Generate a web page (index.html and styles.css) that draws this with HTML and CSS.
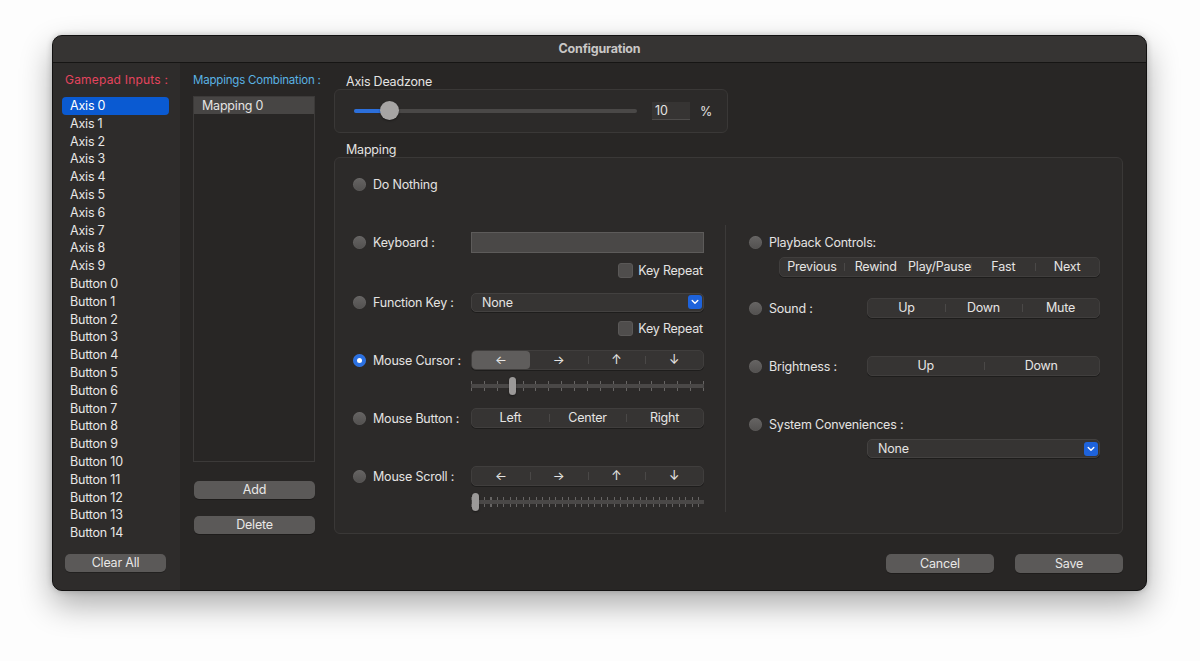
FILE: index.html
```html
<!DOCTYPE html>
<html lang="en">
<head>
    <meta charset="UTF-8">
    <meta name="viewport" content="width=device-width, initial-scale=1.0">
    <title>Configuration</title>
    <link rel="stylesheet" href="styles.css">
</head>
<body>
    <div class="window">
        <div class="titlebar">Configuration</div>
        <div class="window-body">
            <!-- gamepad inputs -->
            <aside class="sidebar">
                <div class="heading heading-red">Gamepad Inputs :</div>
                <ul class="input-list">
                    <li class="selected">Axis 0</li>
                    <li>Axis 1</li>
                    <li>Axis 2</li>
                    <li>Axis 3</li>
                    <li>Axis 4</li>
                    <li>Axis 5</li>
                    <li>Axis 6</li>
                    <li>Axis 7</li>
                    <li>Axis 8</li>
                    <li>Axis 9</li>
                    <li>Button 0</li>
                    <li>Button 1</li>
                    <li>Button 2</li>
                    <li>Button 3</li>
                    <li>Button 4</li>
                    <li>Button 5</li>
                    <li>Button 6</li>
                    <li>Button 7</li>
                    <li>Button 8</li>
                    <li>Button 9</li>
                    <li>Button 10</li>
                    <li>Button 11</li>
                    <li>Button 12</li>
                    <li>Button 13</li>
                    <li>Button 14</li>
                </ul>
                <button class="btn btn-clear">Clear All</button>
            </aside>

            <!-- mapping combinations -->
            <section class="combos">
                <div class="heading heading-blue">Mappings Combination :</div>
                <div class="combo-list">
                    <div class="combo-item selected">Mapping 0</div>
                </div>
                <button class="btn btn-add">Add</button>
                <button class="btn btn-delete">Delete</button>
            </section>

            <!-- settings -->
            <section class="settings">
                <div class="box-title">Axis Deadzone</div>
                <div class="box deadzone">
                    <div class="slider">
                        <div class="slider-fill" style="width: 31px"></div>
                        <div class="slider-knob" style="left: 26px"></div>
                    </div>
                    <div class="number-field">10</div>
                    <span class="unit">%</span>
                </div>

                <div class="box-title">Mapping</div>
                <div class="box mapping">
                    <div class="row do-nothing">
                        <span class="radio"></span><span class="opt-text">Do Nothing</span>
                    </div>
                    <div class="columns">
                        <div class="col col-left">
                            <div class="group group-first">
                                <div class="row">
                                    <div class="opt-label"><span class="radio"></span><span class="opt-text">Keyboard :</span></div>
                                    <div class="key-field"></div>
                                </div>
                                <div class="sub sub-check">
                                    <span class="checkbox"></span><span class="opt-text">Key Repeat</span>
                                </div>
                            </div>
                            <div class="group">
                                <div class="row">
                                    <div class="opt-label"><span class="radio"></span><span class="opt-text">Function Key :</span></div>
                                    <div class="popup"><span>None</span><span class="popup-arrow"><svg width="8" height="6" viewBox="0 0 8 6"><path d="M1.2 1.5 L4 4.3 L6.8 1.5" fill="none" stroke="#fff" stroke-width="1.4" stroke-linecap="round" stroke-linejoin="round"/></svg></span></div>
                                </div>
                                <div class="sub sub-check">
                                    <span class="checkbox"></span><span class="opt-text">Key Repeat</span>
                                </div>
                            </div>
                            <div class="group">
                                <div class="row">
                                    <div class="opt-label"><span class="radio checked"></span><span class="opt-text">Mouse Cursor :</span></div>
                                    <div class="segmented">
                                        <span class="seg active">←</span>
                                        <span class="seg">→</span>
                                        <span class="seg">↑</span>
                                        <span class="seg">↓</span>
                                    </div>
                                </div>
                                <div class="sub">
                                    <div class="tick-slider">
                                        <div class="tick-track"></div>
                                        <div class="tick-knob" style="left: 38px"></div>
                                    </div>
                                </div>
                            </div>
                            <div class="group">
                                <div class="row">
                                    <div class="opt-label"><span class="radio"></span><span class="opt-text">Mouse Button :</span></div>
                                    <div class="segmented">
                                        <span class="seg">Left</span>
                                        <span class="seg">Center</span>
                                        <span class="seg">Right</span>
                                    </div>
                                </div>
                            </div>
                            <div class="group">
                                <div class="row">
                                    <div class="opt-label"><span class="radio"></span><span class="opt-text">Mouse Scroll :</span></div>
                                    <div class="segmented">
                                        <span class="seg">←</span>
                                        <span class="seg">→</span>
                                        <span class="seg">↑</span>
                                        <span class="seg">↓</span>
                                    </div>
                                </div>
                                <div class="sub">
                                    <div class="tick-slider">
                                        <div class="tick-track fine"></div>
                                        <div class="tick-knob" style="left: 1px"></div>
                                    </div>
                                </div>
                            </div>
                        </div>

                        <div class="col col-right">
                            <div class="group group-playback">
                                <div class="row">
                                    <div class="opt-label wide"><span class="radio"></span><span class="opt-text">Playback Controls:</span></div>
                                </div>
                                <div class="sub sub-playback">
                                    <div class="segmented">
                                        <span class="seg">Previous</span>
                                        <span class="seg">Rewind</span>
                                        <span class="seg">Play/Pause</span>
                                        <span class="seg">Fast</span>
                                        <span class="seg">Next</span>
                                    </div>
                                </div>
                            </div>
                            <div class="group">
                                <div class="row">
                                    <div class="opt-label"><span class="radio"></span><span class="opt-text">Sound :</span></div>
                                    <div class="segmented">
                                        <span class="seg">Up</span>
                                        <span class="seg">Down</span>
                                        <span class="seg">Mute</span>
                                    </div>
                                </div>
                            </div>
                            <div class="group">
                                <div class="row">
                                    <div class="opt-label"><span class="radio"></span><span class="opt-text">Brightness :</span></div>
                                    <div class="segmented">
                                        <span class="seg">Up</span>
                                        <span class="seg">Down</span>
                                    </div>
                                </div>
                            </div>
                            <div class="group">
                                <div class="row">
                                    <div class="opt-label wide"><span class="radio"></span><span class="opt-text">System Conveniences :</span></div>
                                </div>
                                <div class="sub sub-popup">
                                    <div class="popup"><span>None</span><span class="popup-arrow"><svg width="8" height="6" viewBox="0 0 8 6"><path d="M1.2 1.5 L4 4.3 L6.8 1.5" fill="none" stroke="#fff" stroke-width="1.4" stroke-linecap="round" stroke-linejoin="round"/></svg></span></div>
                                </div>
                            </div>
                        </div>
                    </div>
                </div>

                <div class="footer">
                    <button class="btn btn-footer">Cancel</button>
                    <button class="btn btn-footer">Save</button>
                </div>
            </section>
        </div>
    </div>
</body>
</html>
```

FILE: styles.css
```css
body {
    margin: 0;
    padding: 35px 53px 70px 52px;
    background-color: #fdfdfd;
    font-family: Inter, "Liberation Sans", sans-serif;
    font-size: 12.5px;
    letter-spacing: -0.2px;
    color: #e4e3e2;
}
.window {
    width: 1095px;
    height: 556px;
    box-sizing: border-box;
    border: 1px solid #121111;
    border-radius: 10px;
    background-color: #282625;
    box-shadow: 0 14px 32px rgba(0, 0, 0, 0.32), 0 0 6px rgba(0, 0, 0, 0.2);
    overflow: hidden;
    display: flex;
    flex-direction: column;
}
.titlebar {
    height: 26px;
    line-height: 26px;
    flex-shrink: 0;
    text-align: center;
    font-weight: 700;
    font-size: 12.5px;
    color: #c9c7c6;
    background-color: #363433;
    border-bottom: 1px solid #161514;
}
.window-body {
    flex: 1;
    display: flex;
    min-height: 0;
}
.heading {
    height: 16px;
    line-height: 16px;
    font-size: 11.5px;
    white-space: nowrap;
}
.heading-red {
    color: #e5445e;
    padding-left: 3px;
    font-size: 12px;
    letter-spacing: 0.2px;
}
.heading-blue {
    color: #5ab3e3;
}

/* sidebar */
.sidebar {
    width: 127px;
    flex-shrink: 0;
    background-color: #2e2c2b;
    box-sizing: border-box;
    padding: 9px 11px 18px 9px;
    display: flex;
    flex-direction: column;
}
.input-list {
    list-style: none;
    margin: 9px 0 0;
    padding: 0;
}
.input-list li {
    height: 17.8px;
    line-height: 17.8px;
    padding-left: 8px;
    border-radius: 4px;
    color: #e8e7e6;
}
.input-list li.selected {
    background-color: #0a5ad2;
    color: #fff;
}
.btn {
    display: block;
    height: 18px;
    padding: 0;
    border: none;
    border-radius: 5px;
    background-color: #5b5958;
    color: #e9e8e7;
    font-family: inherit;
    font-size: 12.5px;
    letter-spacing: -0.2px;
    line-height: 18px;
    text-align: center;
    box-shadow: 0 1px 0 rgba(0, 0, 0, 0.25);
}
.btn-clear {
    margin: auto 0 0 3px;
    width: 101px;
}

/* combinations */
.combos {
    width: 122px;
    flex-shrink: 0;
    padding: 9px 0 0 13px;
}
.combo-list {
    margin-top: 8px;
    height: 366px;
    box-sizing: border-box;
    border: 1px solid #3c3a39;
}
.combo-item {
    height: 17px;
    line-height: 17px;
    padding-left: 8px;
}
.combo-item.selected {
    background-color: #474544;
}
.btn-add {
    width: 121px;
    margin: 19px 0 0 1px;
}
.btn-delete {
    width: 121px;
    margin: 17px 0 0 1px;
}

/* settings */
.settings {
    flex: 1;
    padding: 10px 23px 0 19px;
    display: flex;
    flex-direction: column;
}
.box-title {
    height: 16px;
    line-height: 18px;
    padding-left: 12px;
    color: #e4e3e2;
}
.box {
    box-sizing: border-box;
    border: 1px solid #3a3837;
    border-radius: 6px;
    background-color: #2c2a29;
}
.deadzone {
    width: 394px;
    height: 44px;
    display: flex;
    align-items: center;
    padding-left: 19px;
    margin-bottom: 8px;
}
.slider {
    position: relative;
    width: 283px;
    height: 4px;
    border-radius: 2px;
    background-color: #4a4847;
}
.slider-fill {
    height: 4px;
    border-radius: 2px;
    background-color: #2c6fdb;
}
.slider-knob {
    position: absolute;
    top: -8px;
    width: 19px;
    height: 19px;
    border-radius: 50%;
    background-color: #a7a5a4;
    box-shadow: 0 1px 2px rgba(0, 0, 0, 0.4);
}
.number-field {
    width: 38px;
    height: 18px;
    line-height: 18px;
    margin-left: 15px;
    padding-left: 3px;
    box-sizing: border-box;
    background-color: #363433;
    border-bottom: 1px solid #4e4c4b;
}
.unit {
    margin-left: 10px;
}

.mapping {
    height: 377px;
    padding-top: 16px;
}
.row {
    display: flex;
    align-items: center;
    height: 20px;
    flex-shrink: 0;
}
.do-nothing {
    padding-left: 18px;
}
.radio {
    width: 13px;
    height: 13px;
    flex-shrink: 0;
    border-radius: 50%;
    background: linear-gradient(#666463, #535150);
    box-shadow: inset 0 0 0 0.5px rgba(255, 255, 255, 0.08);
    margin-right: 7px;
    position: relative;
}
.radio.checked {
    background: #2a70e2;
}
.radio.checked::after {
    content: "";
    position: absolute;
    left: 4px;
    top: 4px;
    width: 5px;
    height: 5px;
    border-radius: 50%;
    background-color: #fff;
}
.columns {
    display: flex;
    margin-top: 31px;
    height: 287px;
}
.col {
    box-sizing: border-box;
    padding-top: 9px;
}
.col-left {
    width: 391px;
    padding-left: 18px;
    padding-right: 21px;
    border-right: 1px solid #3c3a39;
}
.col-right {
    flex: 1;
    padding-left: 23px;
    padding-right: 22px;
}
.group {
    display: flex;
    flex-direction: column;
    height: 45px;
    margin-bottom: 13px;
}
.group-first .row,
.group-playback .row {
    margin-top: -2px;
}
.group-first .sub {
    margin-top: 9px;
}
.group-playback {
    height: 51px;
}
.opt-label {
    width: 118px;
    flex-shrink: 0;
    display: flex;
    align-items: center;
}
.opt-label.wide {
    width: auto;
}
.sub {
    margin-top: 7px;
    height: 18px;
    flex-shrink: 0;
    display: flex;
    align-items: center;
    padding-left: 118px;
}
.sub-check {
    justify-content: flex-end;
    padding-right: 1px;
}
.group-playback .sub-playback {
    margin-top: 5px;
    height: 20px;
    padding-left: 30px;
}
.sub-popup {
    margin-top: 5px;
    height: 19px;
}
.checkbox {
    width: 13px;
    height: 13px;
    border-radius: 3px;
    background-color: #4f4d4c;
    border: 1px solid #5a5857;
    margin-right: 5px;
}
.key-field {
    flex: 1;
    height: 21px;
    box-sizing: border-box;
    background-color: #4a4847;
    border: 1px solid #5d5b5a;
}
.popup {
    flex: 1;
    height: 19px;
    box-sizing: border-box;
    display: flex;
    align-items: center;
    justify-content: space-between;
    padding: 0 1px 0 10px;
    border-radius: 5px;
    background-color: #363433;
    border: 1px solid #434140;
    box-shadow: 0 1px 0 rgba(0, 0, 0, 0.3);
}
.popup-arrow {
    width: 14px;
    height: 14px;
    border-radius: 3px;
    background-color: #1e63dc;
    display: flex;
    align-items: center;
    justify-content: center;
}
.segmented {
    flex: 1;
    height: 20px;
    display: flex;
    box-sizing: border-box;
    border-radius: 5px;
    background-color: #363433;
    border: 1px solid #403e3d;
    box-shadow: 0 1px 0 rgba(0, 0, 0, 0.3);
}
.seg {
    flex: 1;
    position: relative;
    text-align: center;
    line-height: 18px;
    border-radius: 4px;
    color: #e6e5e4;
}
.seg + .seg::before {
    content: "";
    position: absolute;
    left: 0;
    top: 5px;
    width: 1px;
    height: 8px;
    background-color: #4a4847;
}
.seg.active {
    background-color: #5f5d5c;
}
.seg.active + .seg::before {
    display: none;
}
.tick-slider {
    position: relative;
    flex: 1;
    height: 18px;
    display: flex;
    align-items: center;
}
.tick-track {
    flex: 1;
    height: 10px;
    background:
        linear-gradient(#4a4847, #4a4847) center / 100% 4px no-repeat,
        repeating-linear-gradient(to right, #676564 0 1px, transparent 1px 12.89px);
}
.tick-track.fine {
    background:
        linear-gradient(#4a4847, #4a4847) center / 100% 4px no-repeat,
        repeating-linear-gradient(to right, #676564 0 1px, transparent 1px 6.5px);
}
.tick-knob {
    position: absolute;
    top: 0;
    width: 7px;
    height: 18px;
    border-radius: 4px;
    background-color: #9b9998;
    box-shadow: 0 1px 2px rgba(0, 0, 0, 0.4);
}
.footer {
    display: flex;
    justify-content: flex-end;
    gap: 21px;
    margin-top: 20px;
}
.btn-footer {
    width: 108px;
    height: 19px;
    line-height: 19px;
}
```
